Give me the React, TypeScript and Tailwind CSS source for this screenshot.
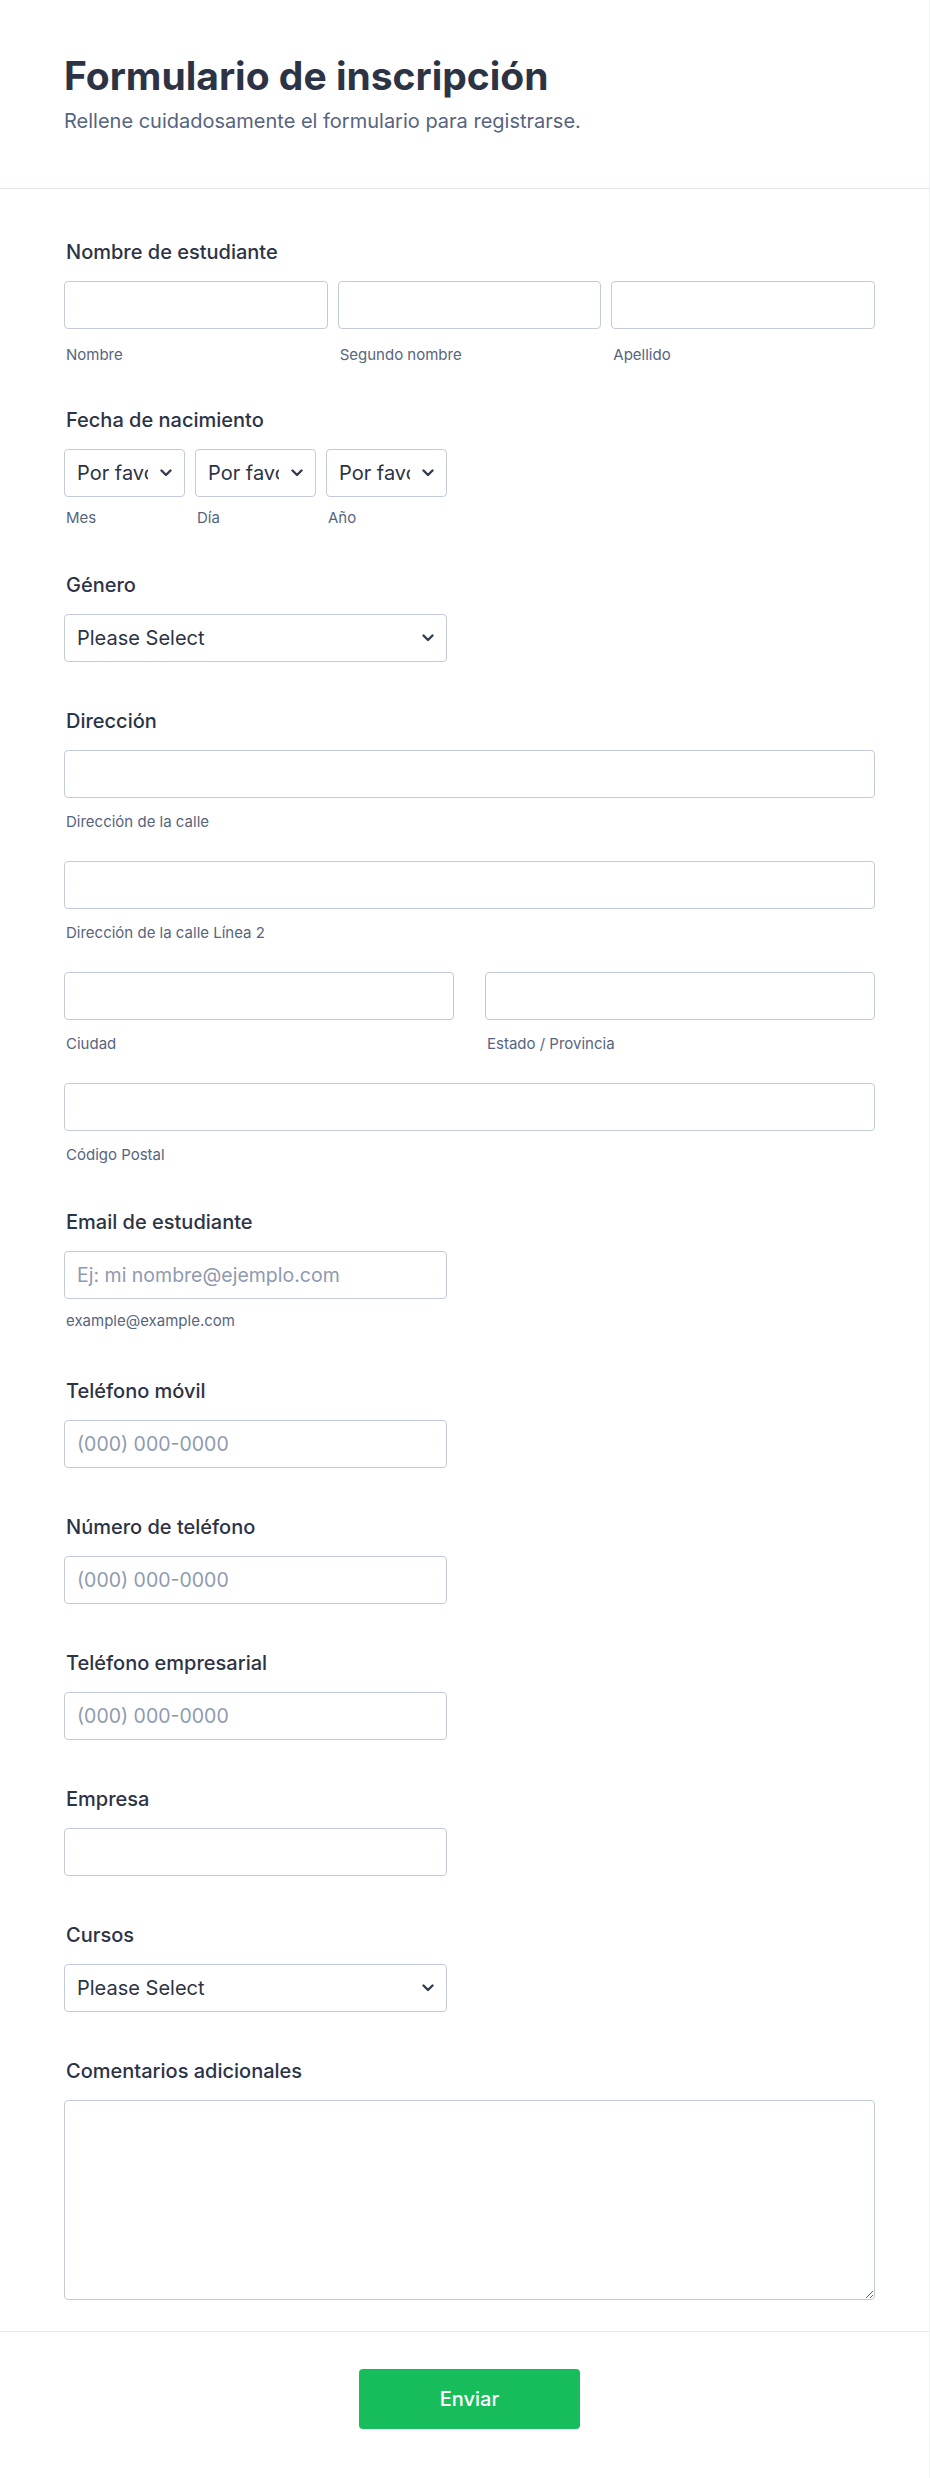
import React from "react";

const Chevron = () => (
  <svg
    className="pointer-events-none absolute right-[13px] top-1/2 -translate-y-1/2"
    width="12"
    height="8"
    viewBox="0 0 12 8"
    fill="none"
  >
    <path
      d="M1.5 1.5L6 6L10.5 1.5"
      stroke="#343c52"
      strokeWidth="2.4"
      strokeLinecap="round"
      strokeLinejoin="round"
    />
  </svg>
);

const inputCls =
  "block h-[48px] w-full rounded-[4px] border border-[#c3cad8] bg-white px-[12px] text-[19.5px] text-[#2c3345] placeholder:text-[#8f9ab0] outline-none";

const Label = ({ children }: { children: React.ReactNode }) => (
  <label className="mb-[17px] ml-[2px] block text-[20px] font-medium leading-[24px] text-[#2c3345]">
    {children}
  </label>
);

const Sub = ({ children, mt }: { children: React.ReactNode; mt: string }) => (
  <span className={`${mt} ml-[2px] block text-[15px] leading-[18px] text-[#57647e]`}>{children}</span>
);

const Select = ({ text, className }: { text: string; className?: string }) => (
  <div className={`relative ${className ?? ""}`}>
    <select
      defaultValue={text}
      className="block h-[48px] w-full appearance-none overflow-hidden whitespace-nowrap rounded-[4px] border border-[#c3cad8] bg-white pl-[12px] pr-[36px] text-[20px] text-[#2c3345] outline-none"
    >
      <option>{text}</option>
    </select>
    <Chevron />
  </div>
);

const Short = ({ placeholder }: { placeholder?: string }) => (
  <div className="w-[383px]">
    <input className={inputCls} placeholder={placeholder} />
  </div>
);

export default function App() {
  return (
    <div className="w-[930px] border-r border-[#eff1f7] bg-white font-['Inter','Noto_Sans',sans-serif]">
      <header className="border-b border-[#e3e6ef] pb-[55px] pl-[64px] pr-[54px] pt-[52px]">
        <h1 className="text-[39px] font-bold leading-[48px] text-[#2c3345]">Formulario de inscripción</h1>
        <p className="mt-[9px] text-[20px] leading-[24px] text-[#57647e]">
          Rellene cuidadosamente el formulario para registrarse.
        </p>
      </header>

      <main className="flex flex-col pb-[31px] pl-[64px] pr-[54px] pt-[51px]">
        {/* Nombre */}
        <div>
          <Label>Nombre de estudiante</Label>
          <div className="grid grid-cols-3 gap-x-[10px]">
            <div>
              <input className={inputCls} />
              <Sub mt="mt-[17px]">Nombre</Sub>
            </div>
            <div>
              <input className={inputCls} />
              <Sub mt="mt-[17px]">Segundo nombre</Sub>
            </div>
            <div>
              <input className={inputCls} />
              <Sub mt="mt-[17px]">Apellido</Sub>
            </div>
          </div>
        </div>

        {/* Fecha */}
        <div className="mt-[44px]">
          <Label>Fecha de nacimiento</Label>
          <div className="grid w-[383px] grid-cols-3 gap-x-[10px]">
            <div>
              <Select text="Por favor seleccione" />
              <Sub mt="mt-[12px]">Mes</Sub>
            </div>
            <div>
              <Select text="Por favor seleccione" />
              <Sub mt="mt-[12px]">Día</Sub>
            </div>
            <div>
              <Select text="Por favor seleccione" />
              <Sub mt="mt-[12px]">Año</Sub>
            </div>
          </div>
        </div>

        {/* Género */}
        <div className="mt-[46px]">
          <Label>Género</Label>
          <Select text="Please Select" className="w-[383px]" />
        </div>

        {/* Dirección */}
        <div className="mt-[47px]">
          <Label>Dirección</Label>
          <input className={inputCls} />
          <Sub mt="mt-[15px]">Dirección de la calle</Sub>
          <input className={`${inputCls} mt-[30px]`} />
          <Sub mt="mt-[15px]">Dirección de la calle Línea 2</Sub>
          <div className="mt-[30px] grid grid-cols-2 gap-x-[31px]">
            <div>
              <input className={inputCls} />
              <Sub mt="mt-[15px]">Ciudad</Sub>
            </div>
            <div>
              <input className={inputCls} />
              <Sub mt="mt-[15px]">Estado / Provincia</Sub>
            </div>
          </div>
          <input className={`${inputCls} mt-[30px]`} />
          <Sub mt="mt-[15px]">Código Postal</Sub>
        </div>

        {/* Email */}
        <div className="mt-[46px]">
          <Label>Email de estudiante</Label>
          <Short placeholder="Ej: mi nombre@ejemplo.com" />
          <Sub mt="mt-[13px]">example@example.com</Sub>
        </div>

        <div className="mt-[49px]">
          <Label>Teléfono móvil</Label>
          <Short placeholder="(000) 000-0000" />
        </div>

        <div className="mt-[47px]">
          <Label>Número de teléfono</Label>
          <Short placeholder="(000) 000-0000" />
        </div>

        <div className="mt-[47px]">
          <Label>Teléfono empresarial</Label>
          <Short placeholder="(000) 000-0000" />
        </div>

        <div className="mt-[47px]">
          <Label>Empresa</Label>
          <Short />
        </div>

        <div className="mt-[47px]">
          <Label>Cursos</Label>
          <Select text="Please Select" className="w-[383px]" />
        </div>

        <div className="mt-[47px]">
          <Label>Comentarios adicionales</Label>
          <textarea className="block h-[200px] w-full rounded-[4px] border border-[#c3cad8] bg-white p-[12px] text-[19.5px] text-[#2c3345] outline-none" />
        </div>
      </main>

      <footer className="flex justify-center border-t border-[#e6e8f0] pb-[49px] pl-[64px] pr-[54px] pt-[37px]">
        <button className="h-[60px] w-[221px] rounded-[4px] bg-[#18bd5b] text-[20px] font-medium text-white">
          Enviar
        </button>
      </footer>
    </div>
  );
}
